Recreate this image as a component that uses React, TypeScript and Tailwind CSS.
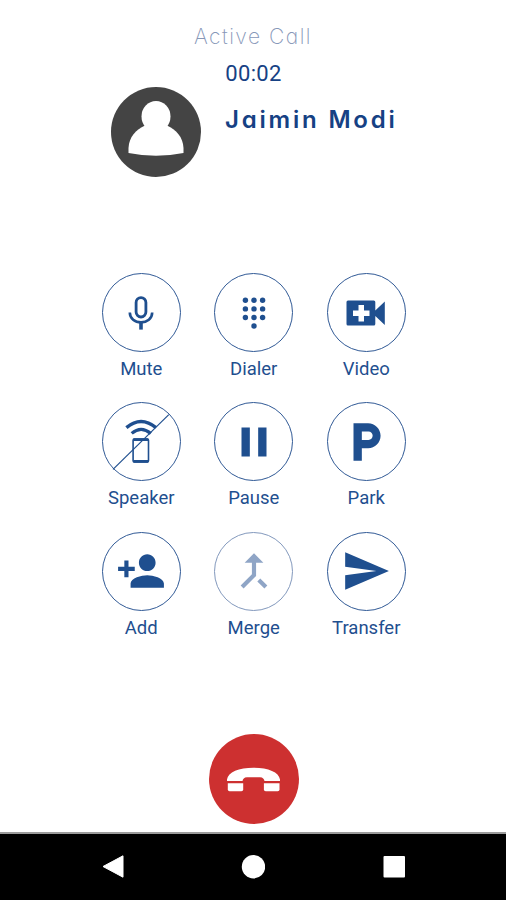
import type { ReactNode } from "react";
import {
  MdCallMerge,
  MdLocalParking,
  MdPause,
  MdPersonAdd,
  MdSend,
} from "react-icons/md";

interface CallAction {
  label: string;
  icon: ReactNode;
  disabled?: boolean;
}

function MicIcon() {
  return (
    <svg viewBox="-40 -40 80 80" className="h-20 w-20" fill="none" stroke="currentColor">
      <rect x="-4.9" y="-15.4" width="9.8" height="19.4" rx="4.9" strokeWidth="2.8" />
      <path d="M-11.2 -.5C-11.2 5.6 -6 9.4 0 9.4S11.2 5.6 11.2 -.5" strokeWidth="2.6" />
      <path d="M0 9V16.6" strokeWidth="3.6" />
    </svg>
  );
}

function DialpadIcon() {
  return (
    <svg viewBox="-40 -40 80 80" className="h-20 w-20" fill="currentColor">
      {[-12.7, -4.1, 4.5].map((y) =>
        [-8.6, 0, 8.6].map((x) => <circle key={`${x},${y}`} cx={x} cy={y} r="2.7" />)
      )}
      <circle cx="0" cy="13" r="2.7" />
    </svg>
  );
}

function VideoIcon() {
  return (
    <svg viewBox="-40 -40 80 80" className="h-20 w-20" fill="currentColor">
      <path
        fillRule="evenodd"
        d="M-18 -12.5H7.8Q9.3 -12.5 9.3 -11V-2.5L18.8 -11.5V12L9.3 3V11Q9.3 12.5 7.8 12.5H-18Q-19.5 12.5 -19.5 11V-11Q-19.5 -12.5 -18 -12.5ZM-7.5 -8V-2.6H-13V2.9H-7.5V8.4H-2V2.9H3.5V-2.6H-2V-8Z"
      />
    </svg>
  );
}

function SpeakerOffIcon() {
  return (
    <svg viewBox="-40 -40 80 80" className="h-20 w-20" fill="none" stroke="currentColor">
      <path d="M-14.6 -14.4Q0 -26.6 15 -14.4" strokeWidth="3.4" />
      <path d="M-9.3 -8.6Q0 -16.8 9.8 -8.6" strokeWidth="3.2" />
      <rect x="-7.9" y="-3" width="15.4" height="23" rx="1.2" strokeWidth="1.6" />
      <path d="M-7.6 -2.3H7.2M-7.6 19.3H7.2" strokeWidth="2.8" />
      <path d="M-28 27.4L27.8 -27.4" strokeWidth="1.2" />
    </svg>
  );
}

const actions: CallAction[] = [
  { label: "Mute", icon: <MicIcon /> },
  { label: "Dialer", icon: <DialpadIcon /> },
  { label: "Video", icon: <VideoIcon /> },
  { label: "Speaker", icon: <SpeakerOffIcon /> },
  { label: "Pause", icon: <MdPause size={50} /> },
  { label: "Park", icon: <MdLocalParking size={50} /> },
  { label: "Add", icon: <MdPersonAdd size={50} /> },
  { label: "Merge", icon: <MdCallMerge size={50} />, disabled: true },
  { label: "Transfer", icon: <MdSend size={50} /> },
];

function ActionButton({ label, icon, disabled }: CallAction) {
  return (
    <button
      type="button"
      disabled={disabled}
      className="flex h-[129.3px] flex-col items-center text-[#1f4f8f]"
    >
      <span
        className={`flex h-[79px] w-[79px] shrink-0 items-center justify-center rounded-full border ${
          disabled ? "border-[#8399bd] text-[#8fa5c6]" : "border-[#315a96]"
        }`}
      >
        <span className="flex shrink-0 items-center justify-center">{icon}</span>
      </span>
      <span className="mt-[5px] text-[18.5px] leading-6">{label}</span>
    </button>
  );
}

function Avatar() {
  return (
    <svg viewBox="-45 -45 90 90" className="h-[90px] w-[90px] shrink-0">
      <circle r="45" fill="#444444" />
      <g fill="white">
        <ellipse cy="-15.5" rx="14.5" ry="15.5" />
        <path d="M-27.5 21V16C-27 5 -20 -2.5 -11 -6.5L0 -9L11 -6.5C20 -2.5 27 5 27.5 16V21Q0 26.5 -27.5 21Z" />
      </g>
    </svg>
  );
}

function HangUpButton() {
  return (
    <button type="button" className="h-[90px] w-[90px]">
      <svg viewBox="-45 -45 90 90" className="h-[90px] w-[90px]">
        <circle r="45" fill="#cd3030" />
        <g fill="white">
          <path d="M-27 2V.5C-26 -7 -15 -11.3 -.5 -11.3S25 -7 26 .5V2H10.5C10 0 9 -1.8 6 -1.8H-7C-10 -1.8 -11 0 -11.5 2Z" />
          <path d="M-26.2 4.3H-10.8V10.5Q-10.8 12.3 -12.6 12.3H-24.4Q-26.2 12.3 -26.2 10.5Z" />
          <path d="M9.9 4.3H25.5V10.5Q25.5 12.3 23.7 12.3H11.7Q9.9 12.3 9.9 10.5Z" />
        </g>
      </svg>
    </button>
  );
}

function NavigationBar() {
  return (
    <nav className="flex h-[68px] items-center justify-between border-t-2 border-[#9b9b9b] bg-black px-[101px] text-white">
      <svg viewBox="0 0 24 24" className="h-6 w-6" fill="currentColor">
        <path d="M2 11.5L22 .8V22.2Z" stroke="currentColor" strokeLinejoin="round" />
      </svg>
      <svg viewBox="0 0 24 24" className="h-6 w-6" fill="currentColor">
        <circle cx="12.5" cy="11.7" r="11.7" />
      </svg>
      <svg viewBox="0 0 24 24" className="h-6 w-6" fill="currentColor">
        <rect x="2.5" y="1" width="21.5" height="21.5" rx="1" />
      </svg>
    </nav>
  );
}

export default function App() {
  return (
    <main className="flex h-[900px] w-[506px] flex-col overflow-hidden bg-white font-[Roboto,sans-serif]">
      <header className="flex h-[273px] flex-col pt-[22px]">
        <h1 className="text-center font-[Inter,sans-serif] text-[21px] leading-[30px] font-extralight tracking-[1.5px] text-[#8797b8] [font-feature-settings:'cv11']">
          Active Call
        </h1>
        <div className="mt-[9px] pl-[1px] text-center text-[22px] leading-[26px] tracking-[0.3px] text-[#164184]">
          00:02
        </div>
        <div className="flex pl-[111px]">
          <Avatar />
          <div className="mt-[18px] ml-6 font-[Inter,sans-serif] text-[24px] leading-[30px] font-semibold tracking-[2.8px] whitespace-nowrap text-[#164184] [font-feature-settings:'cv11']">
            Jaimin Modi
          </div>
        </div>
      </header>

      <section className="grid grid-cols-[112.5px_112.5px_112.5px] justify-start pl-[85px]">
        {actions.map((action) => (
          <ActionButton key={action.label} {...action} />
        ))}
      </section>

      <div className="mt-auto flex justify-center pb-[8px] pl-[1px]">
        <HangUpButton />
      </div>
      <NavigationBar />
    </main>
  );
}
